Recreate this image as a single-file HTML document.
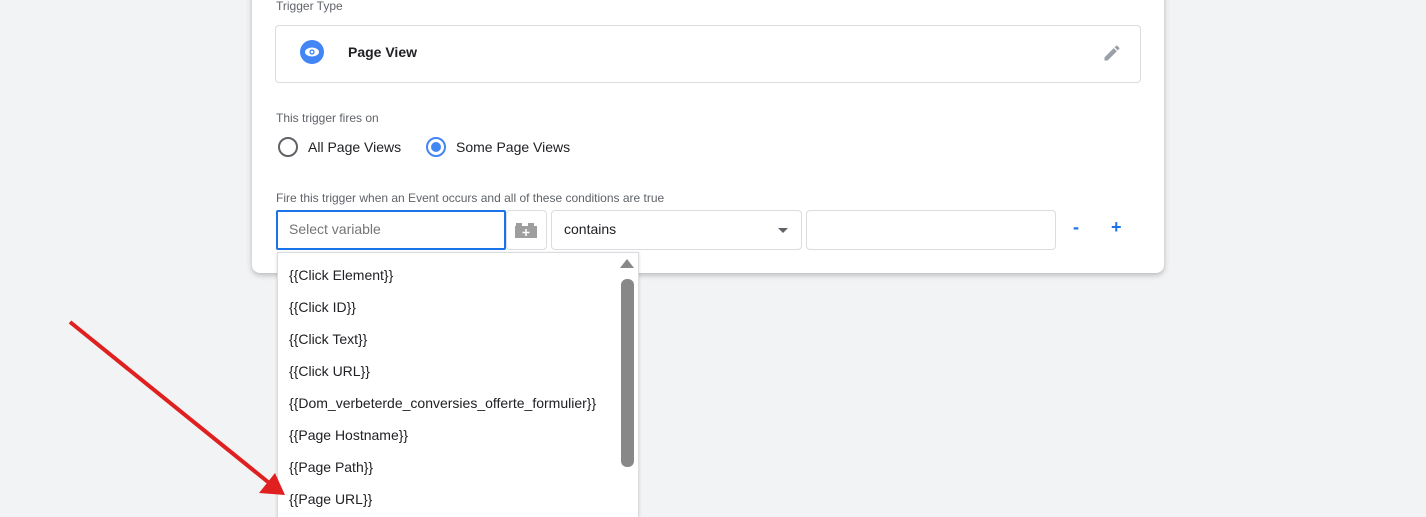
<!DOCTYPE html>
<html style="overflow:hidden;height:517px"><head><style>
body{margin:0;width:1426px;height:517px;background:#f1f3f4;font-family:"Liberation Sans",Roboto,sans-serif;position:relative;overflow:hidden;color:#202124}
.abs{position:absolute}
.card{left:252px;top:-10px;width:912px;height:283px;background:#fff;border-radius:0 0 8px 8px;box-shadow:0 2px 6px rgba(0,0,0,.25)}
.lbl{font-size:12px;color:#5f6368}
.box{border:1px solid #dadce0;border-radius:4px;background:#fff;box-sizing:border-box}
.item{left:289px;font-size:14px;color:#202124}
</style></head><body>
<div class="abs card"></div>
<div class="abs lbl" style="left:276px;top:-1px">Trigger Type</div>
<div class="abs box" style="left:275px;top:25px;width:866px;height:58px"></div>
<svg class="abs" style="left:300px;top:40px" width="24" height="24" viewBox="0 0 24 24"><circle cx="12" cy="12" r="12" fill="#4285f4"/><ellipse cx="12" cy="12" rx="7" ry="4.5" fill="#fff"/><circle cx="12" cy="12" r="2.6" fill="#4285f4"/><circle cx="12" cy="12" r="1.3" fill="#fff"/></svg>
<div class="abs" style="left:348px;top:44px;font-size:14px;font-weight:bold">Page View</div>
<svg class="abs" style="left:1102px;top:43px" width="20" height="20" viewBox="0 0 24 24"><path d="M3 17.25V21h3.75L17.81 9.94l-3.75-3.75L3 17.25zM20.71 7.04a1 1 0 000-1.41l-2.34-2.34a1 1 0 00-1.41 0l-1.830 1.83 3.75 3.75 1.83-1.83z" fill="#9aa0a6"/></svg>
<div class="abs lbl" style="left:276px;top:111px">This trigger fires on</div>
<div class="abs" style="left:278px;top:137px;width:16px;height:16px;border:2px solid #5f6368;border-radius:50%"></div>
<div class="abs" style="left:308px;top:139px;font-size:14px">All Page Views</div>
<div class="abs" style="left:426px;top:137px;width:16px;height:16px;border:2px solid #4285f4;border-radius:50%"></div>
<div class="abs" style="left:431px;top:142px;width:10px;height:10px;background:#4285f4;border-radius:50%"></div>
<div class="abs" style="left:456px;top:139px;font-size:14px">Some Page Views</div>
<div class="abs lbl" style="left:276px;top:191px">Fire this trigger when an Event occurs and all of these conditions are true</div>
<div class="abs box" style="left:276px;top:210px;width:230px;height:40px;border:2px solid #1a73e8;border-radius:2px"></div>
<div class="abs" style="left:289px;top:221px;font-size:14px;color:#757575">Select variable</div>
<div class="abs box" style="left:506px;top:210px;width:41px;height:40px"></div>
<svg class="abs" style="left:514px;top:222px" width="24" height="16" viewBox="0 0 24 16"><rect x="1" y="4" width="22" height="12" fill="#9e9e9e"/><rect x="2" y="1" width="6" height="4" fill="#9e9e9e"/><rect x="14" y="1" width="6" height="4" fill="#9e9e9e"/><path d="M12 7v7M8.5 10.5h7" stroke="#fff" stroke-width="1.5"/></svg>
<div class="abs box" style="left:551px;top:210px;width:251px;height:40px"></div>
<div class="abs" style="left:564px;top:221px;font-size:14px">contains</div>
<div class="abs" style="left:778px;top:228px;width:0;height:0;border-left:5px solid transparent;border-right:5px solid transparent;border-top:5px solid #5f6368"></div>
<div class="abs box" style="left:806px;top:210px;width:250px;height:40px"></div>
<div class="abs" style="left:1073px;top:217px;font-size:18px;color:#1a73e8;font-weight:bold">-</div>
<div class="abs" style="left:1111px;top:217px;font-size:18px;color:#1a73e8;font-weight:bold">+</div>
<div class="abs" style="left:277px;top:252px;width:362px;height:265px;background:#fff;border:1px solid #dadce0;border-bottom:none;box-sizing:border-box;box-shadow:0 1px 3px rgba(0,0,0,.15)"></div>
<div class="abs" style="left:620px;top:259px;width:0;height:0;border-left:7px solid transparent;border-right:7px solid transparent;border-bottom:9px solid #888"></div>
<div class="abs" style="left:621px;top:279px;width:13px;height:188px;background:#888;border-radius:6px"></div>
<div class="abs item" style="top:267px">{{Click Element}}</div>
<div class="abs item" style="top:299px">{{Click ID}}</div>
<div class="abs item" style="top:331px">{{Click Text}}</div>
<div class="abs item" style="top:363px">{{Click URL}}</div>
<div class="abs item" style="top:395px">{{Dom_verbeterde_conversies_offerte_formulier}}</div>
<div class="abs item" style="top:427px">{{Page Hostname}}</div>
<div class="abs item" style="top:459px">{{Page Path}}</div>
<div class="abs item" style="top:491px">{{Page URL}}</div>
<svg class="abs" style="left:0;top:0" width="1426" height="517"><line x1="70" y1="322" x2="268" y2="482" stroke="#e02020" stroke-width="4"/><polygon points="285,495 259,493 275,473" fill="#e02020"/></svg>
</body></html>
